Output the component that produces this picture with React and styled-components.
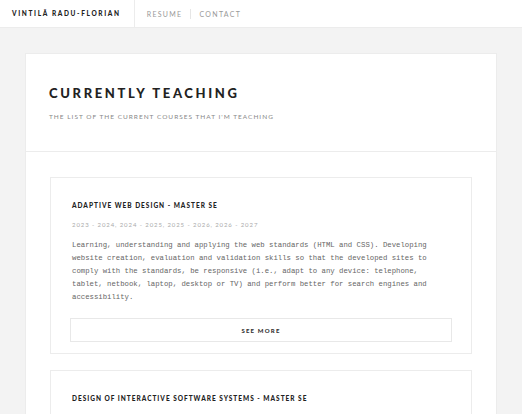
import React from "react";
import styled, { createGlobalStyle } from "styled-components";

const GlobalStyle = createGlobalStyle`
  html, body {
    margin: 0;
    padding: 0;
    background: #f3f3f3;
    font-family: "Lato", "Open Sans", sans-serif;
  }
`;

const courses = [
  {
    id: 1,
    title: "Adaptive Web Design - Master SE",
    years: "2023 - 2024, 2024 - 2025, 2025 - 2026, 2026 - 2027",
    text:
      "Learning, understanding and applying the web standards (HTML and CSS). Developing website creation, evaluation and validation skills so that the developed sites to comply with the standards, be responsive (i.e., adapt to any device: telephone, tablet, netbook, laptop, desktop or TV) and perform better for search engines and accessibility.",
  },
  {
    id: 2,
    title: "Design of Interactive Software Systems - Master SE",
    years: "2023 - 2024, 2024 - 2025",
    text: "",
  },
];

const App = () => {
  return (
    <>
      <GlobalStyle />
      <NavBar>
        <Brand>Vintilă Radu-Florian</Brand>
        <NavLinks>
          <NavLink>Resume</NavLink>
          <NavLink>Contact</NavLink>
        </NavLinks>
      </NavBar>
      <Main>
        <Panel>
          <PanelHeader>
            <PageTitle>Currently Teaching</PageTitle>
            <PageSubtitle>The list of the current courses that I'm teaching</PageSubtitle>
          </PanelHeader>
          <PanelBody>
            {courses.map((course) => (
              <CourseCard key={course.id}>
                <CourseTitle>{course.title}</CourseTitle>
                <CourseYears>{course.years}</CourseYears>
                <CourseText>{course.text}</CourseText>
                <MoreButton>See more</MoreButton>
              </CourseCard>
            ))}
          </PanelBody>
        </Panel>
      </Main>
    </>
  );
};

export default App;

// 상단 내비게이션
const NavBar = styled.nav`
  display: flex;
  align-items: stretch;
  height: 27px;
  background: #fff;
  border-bottom: 1px solid #ececec;
`;

const Brand = styled.div`
  display: flex;
  align-items: center;
  padding: 0 13px 0 12px;
  border-right: 1px solid #ececec;
  font-size: 6.5px;
  font-weight: 900;
  letter-spacing: 1.65px;
  text-transform: uppercase;
  color: #222;
`;

const NavLinks = styled.div`
  display: flex;
  align-items: center;
  padding-left: 4px;
`;

const NavLink = styled.a`
  padding: 0 8px;
  font-size: 7px;
  letter-spacing: 1.3px;
  text-transform: uppercase;
  color: #999;
  line-height: 10px;
  & + & {
    border-left: 1px solid #e6e6e6;
  }
`;

const Main = styled.main`
  padding: 25px 25px 0;
`;

const Panel = styled.section`
  background: #fff;
  border: 1px solid #ececec;
  border-bottom: none;
`;

const PanelHeader = styled.header`
  padding: 31px 23px 31px;
  border-bottom: 1px solid #ececec;
`;

const PageTitle = styled.h1`
  margin: 0;
  font-size: 13px;
  line-height: 16px;
  font-weight: 900;
  letter-spacing: 2.65px;
  text-transform: uppercase;
  color: #222;
`;

const PageSubtitle = styled.p`
  margin: 12px 0 0;
  font-size: 6.5px;
  letter-spacing: 1px;
  text-transform: uppercase;
  color: #888;
`;

const PanelBody = styled.div`
  display: flex;
  flex-direction: column;
  gap: 16px;
  padding: 25px 24px;
`;

const CourseCard = styled.article`
  border: 1px solid #ececec;
  padding: 23px 21px 11px;
`;

const CourseTitle = styled.h2`
  margin: 0;
  font-size: 6.5px;
  line-height: 10px;
  font-weight: 900;
  letter-spacing: 1px;
  text-transform: uppercase;
  color: #222;
`;

const CourseYears = styled.div`
  margin-top: 9px;
  font-size: 6px;
  line-height: 9px;
  letter-spacing: 0.9px;
  color: #aaa;
`;

const CourseText = styled.p`
  margin: 10px 14px 0 0;
  font-family: "Liberation Mono", "Courier New", monospace;
  font-size: 7.3px;
  line-height: 13px;
  color: #666;
`;

const MoreButton = styled.button`
  display: block;
  width: calc(100% + 4px);
  margin: 14px -2px 0;
  height: 24px;
  background: #fff;
  border: 1px solid #e8e8e8;
  font-family: "Lato", sans-serif;
  font-size: 6px;
  font-weight: 900;
  letter-spacing: 1.2px;
  text-transform: uppercase;
  color: #333;
`;
